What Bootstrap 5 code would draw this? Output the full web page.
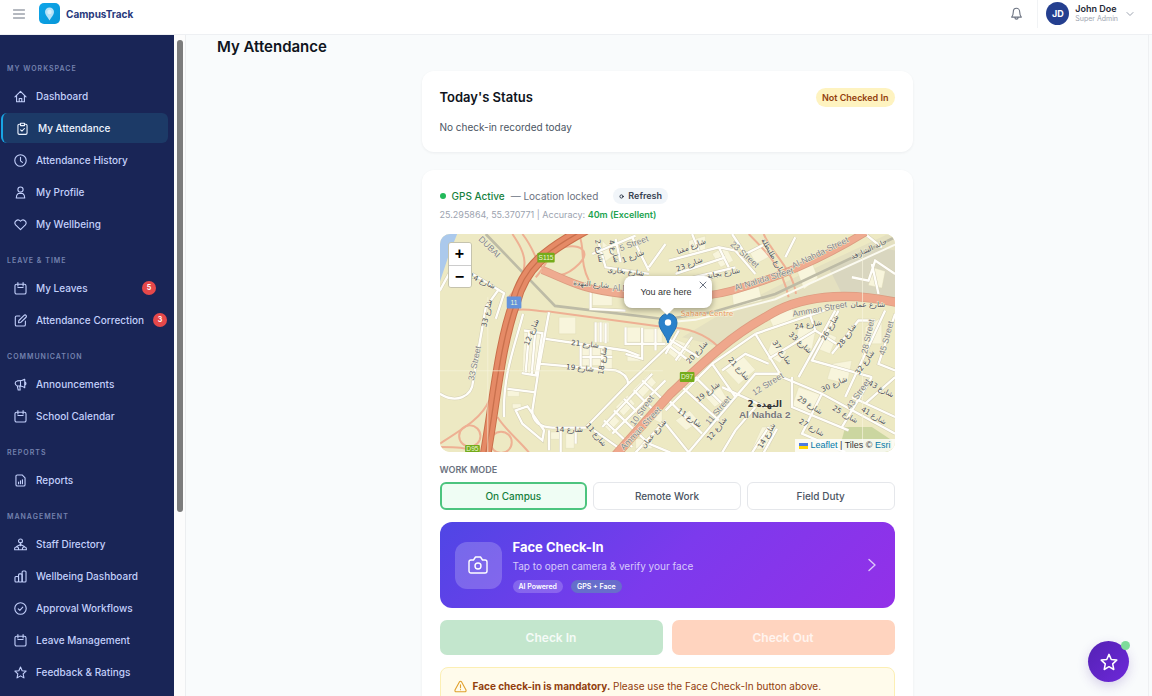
<!DOCTYPE html>
<html lang="en">
<head>
<meta charset="utf-8">
<meta name="viewport" content="width=device-width, initial-scale=1">
<title>CampusTrack – My Attendance</title>
<link href="https://cdn.jsdelivr.net/npm/bootstrap@5.3.0/dist/css/bootstrap.min.css" rel="stylesheet">
<style>
  body { font-family: Inter, "Liberation Sans", sans-serif; font-size: 10px; line-height: 16px; color: #0f1420; background: #f9fbfc; }
  button { font-family: inherit; }
  svg { flex-shrink: 0; }
  .line-icon { fill: none; stroke: currentColor; stroke-width: 1.7; stroke-linecap: round; stroke-linejoin: round; }
  .thin { stroke-width: 1; }
  .medium { stroke-width: 1.4; }

  .topbar { height: 35px; padding: 0 18px 7px 13px; background: #fff; border-bottom: 1px solid #eef0f3; }
  .plain-btn { background: none; border: 0; padding: 0; line-height: 0; color: #6b7280; }
  .bell-btn { margin: 0 14px 0 auto; }
  .brand-link { font-size: 10px; font-weight: 700; color: #27397c; text-decoration: none; gap: 6px; margin-left: 14px; }
  .brand-tile { width: 21px; height: 21px; border-radius: 5px; background: linear-gradient(135deg, #0ea5e9, #0797d8); }
  .user-btn { border-left: 1px solid #f1f3f5; padding-left: 8px; height: 28px; text-align: left; gap: 6px; }
  .user-btn .line-icon { margin-left: 2px; color: #9ca3af; }
  .avatar { width: 23px; height: 23px; border-radius: 50%; background: #243f8f; color: #fff; font-size: 9px; font-weight: 700; }
  .user-name { font-size: 9px; line-height: 10px; font-weight: 600; color: #1f2937; }
  .user-role { font-size: 7px; line-height: 10px; color: #9ca3af; }

  .shell { min-height: 0; }
  .side-nav { width: 174px; background: #192556; padding-top: 14px; overflow: hidden; }
  .side-title { margin: 0; padding: 14px 0 6px 7px; font-size: 7px; line-height: 12px; font-weight: 600; letter-spacing: 1px; color: #7482ae; text-transform: uppercase; }
  .side-link { display: flex; align-items: center; gap: 9px; height: 30px; margin: 0 6px 2px 1px; padding: 0 12px 0 13px; font-weight: 500; color: #c3d0fb; text-decoration: none; white-space: nowrap; border-radius: 6px; }
  .side-link.active { background: #1c3a67; border-left: 2px solid #18a5e4; color: #eef4ff; }
  .count { flex-shrink: 0; width: 14px; height: 14px; border-radius: 50%; background: #e5484a; color: #fff; font-size: 7px; line-height: 14px; font-weight: 700; text-align: center; }
  .side-track { width: 12px; background: #fcfcfc; border-right: 1px solid #eceef0; padding: 5px 2px 0 3px; }
  .side-thumb { height: 72%; border-radius: 3px; background: #7c7c7c; }

  .content { padding: 0 31px 20px; min-width: 0; overflow-y: auto; scrollbar-width: none; margin-right: 3px; border-right: 1px solid #eef0f2; }
  .content::-webkit-scrollbar { display: none; }
  .page-title { font-size: 15px; line-height: 24px; font-weight: 600; margin-bottom: 12px; }
  .stack { max-width: 491px; margin: 0 auto; }
  .panel { background: #fff; border-radius: 12px; padding: 16px 18px 17px; margin-bottom: 18px; box-shadow: 0 1px 3px rgba(15, 23, 42, .06); }
  .panel-title { font-size: 13px; line-height: 20px; font-weight: 600; }
  .status-pill { background: #fef3c0; color: #92400e; border-radius: 10px; padding: 2px 6px; font-size: 9px; line-height: 15px; font-weight: 600; }
  .muted { color: #4b5563; }
  .gps-row { height: 20px; gap: 6px; }
  .gps-dot { width: 6px; height: 6px; border-radius: 50%; background: #22b95a; }
  .gps-on { color: #15803d; }
  .gps-note { color: #6b7280; }
  .refresh-btn { border: 0; border-radius: 8px; background: #f1f5f9; color: #374151; font-size: 9px; line-height: 16px; font-weight: 600; padding: 0 6px; margin-left: 9px; }
  .coords { font-size: 9px; line-height: 14px; color: #9ca3af; margin: 2px 0 12px; }
  .coords strong { color: #22a34f; font-weight: 600; }

  .map-box { position: relative; height: 218px; border-radius: 10px; overflow: hidden; background: #ede9c3; font-family: "Liberation Sans", Arial, sans-serif; }
  .map-art { width: 100%; height: 100%; display: block; }
  .zoom-ctl { position: absolute; top: 8px; left: 8px; border-radius: 3px; border: 1px solid #c5c3ae; overflow: hidden; }
  .zoom-ctl button { display: block; width: 22px; height: 22px; border: 0; padding: 0; background: #fff; color: #000; font-size: 16px; line-height: 20px; font-weight: 700; }
  .zoom-ctl button + button { border-top: 1px solid #ccc; }
  .pin { position: absolute; left: 50%; top: 79px; margin-left: -9px; }
  .you-pop { position: absolute; left: 50%; top: 42px; width: 88px; height: 32px; margin-left: -43px; background: #fff; border-radius: 8px; font-size: 9px; line-height: 32px; color: #333; text-align: center; padding-right: 4px; box-shadow: 0 2px 6px rgba(0, 0, 0, .35); }
  .you-pop::after { content: ""; position: absolute; left: 50%; top: 100%; margin-left: -8px; border: 7px solid transparent; border-top-color: #fff; border-bottom: 0; }
  .you-pop button { position: absolute; top: 5px; right: 5px; line-height: 0; }
  .credit { position: absolute; right: 0; bottom: 0; background: rgba(255, 255, 255, .8); padding: 0 4px; font-size: 9px; line-height: 13px; color: #333; }
  .credit a { color: #0078a8; text-decoration: none; }

  .mode-title { font-size: 9px; line-height: 14px; margin: 11px 0 5px; font-weight: 600; color: #6b7280; }
  .modes { display: grid; grid-template-columns: repeat(3, 1fr); gap: 6px; }
  .mode-btn { height: 28px; border: 1px solid #e5e7eb; border-radius: 6px; background: #fff; color: #4b5563; line-height: 16px; font-weight: 500; padding: 0; }
  .mode-btn.active { border: 2px solid #4cc47e; background: #effdf4; color: #15803d; }
  .face-btn { margin-top: 12px; min-height: 86px; padding: 0 18px 0 15px; gap: 11px; border: 0; border-radius: 12px; text-align: left; color: #fff; background: linear-gradient(135deg, #4f46e5, #7c3aed 50%, #9330e8); }
  .face-btn > .medium { color: #dcc6fa; }
  .cam-tile { width: 47px; height: 47px; border-radius: 12px; background: rgba(255, 255, 255, .2); }
  .face-title { font-size: 13px; line-height: 18px; font-weight: 700; }
  .face-sub { line-height: 16px; margin: 2px 0 6px; color: #d7c9fb; }
  .chip { border-radius: 7px; background: rgba(255, 255, 255, .2); font-size: 7px; line-height: 13px; font-weight: 600; padding: 0 6px; }
  .chip-gps { background: rgba(90, 160, 170, .5); }
  .checks { display: grid; grid-template-columns: 1fr 1fr; gap: 9px; margin-top: 12px; }
  .check-btn { height: 35px; border: 0; border-radius: 7px; font-size: 12px; font-weight: 600; color: #f5fbf7; background: #c3e6cd; }
  .check-out { color: #fff4ef; background: #ffd4bf; }
  .notice { margin-top: 12px; padding: 9px 13px; gap: 6px; border: 1px solid #fcefb4; border-radius: 8px; background: #fffbeb; color: #92400e; line-height: 18px; }
  .notice .line-icon { color: #e0a02c; }
  .fab { position: fixed; right: 23px; bottom: 14px; width: 41px; height: 41px; border: 0; border-radius: 50%; padding: 0; color: #fff; background: linear-gradient(135deg, #5422b4, #6d28d9); box-shadow: 0 4px 12px rgba(80, 40, 160, .2); }
  .fab-dot { position: absolute; top: 0; right: -1px; width: 9px; height: 9px; border-radius: 50%; background: #7edc9b; }

  .casing { fill: none; stroke: #d3ceb4; stroke-width: 10; }
  .street { fill: none; stroke: #fffefa; stroke-width: 7; }
  .ramp { fill: none; stroke: #eeb093; stroke-width: 6; }
  .lots { fill: #f8f5dc; stroke: #dcd7b4; stroke-width: 1; }
  .map-text text { font: 22px "DejaVu Sans", "Liberation Sans", sans-serif; fill: #50525c; text-anchor: middle; stroke: #f5f2d8; stroke-width: 3; paint-order: stroke; }
  .map-text .en { font-size: 26px; fill: #828388; font-family: "Liberation Sans", sans-serif; }
  .map-text .mall { font-size: 22px; fill: #e9975e; }
  .map-text .area { font-size: 26px; font-weight: 700; fill: #333; }
  .map-text .area-en { font-size: 30px; font-weight: 700; fill: #77777c; }
</style>
</head>
<body class="d-flex flex-column vh-100 overflow-hidden">

<svg width="0" height="0" class="position-absolute" aria-hidden="true">
  <defs>
    <symbol id="i-home" viewBox="0 0 20 20"><path d="M1.500 10.500 10 2l8.500 8.500M4 8.500V18h12V8.500M8 18v-5h4v5"/></symbol>
    <symbol id="i-clip" viewBox="0 0 20 20"><path d="M7 3.500H5a2 2 0 0 0-2 2V17a2 2 0 0 0 2 2h10a2 2 0 0 0 2-2V5.500a2 2 0 0 0-2-2h-2M7 2h6v3.500H7zM7 12l2.200 2.200L13 10"/></symbol>
    <symbol id="i-clock" viewBox="0 0 20 20"><circle cx="10" cy="10" r="8.800"/><path d="M10 5v5.500l3 2.500"/></symbol>
    <symbol id="i-user" viewBox="0 0 20 20"><circle cx="10" cy="5.500" r="4"/><path d="M6.500 11.500h7q3 2 3 7h-13q0-5 3-7z"/></symbol>
    <symbol id="i-heart" viewBox="0 0 20 20"><path d="M10 18 2.500 10.500C-1 6 5.500 0 10 5c4.500-5 11 1 7.500 5.500z"/></symbol>
    <symbol id="i-cal" viewBox="0 0 20 20"><rect x="1.500" y="3.500" width="17" height="15" rx="2.500"/><path d="M6 1v5M14 1v5M6 8.500h8"/></symbol>
    <symbol id="i-edit" viewBox="0 0 20 20"><path d="M9 3H4a2 2 0 0 0-2 2v11.500a2 2 0 0 0 2 2h11.500a2 2 0 0 0 2-2V11M7 13.500l.5-3.500 8-8a2 2 0 0 1 3 3l-8 8z"/></symbol>
    <symbol id="i-horn" viewBox="0 0 20 20"><path d="M16.500 2v13C13 12 10 12 5 12a3.800 3.800 0 0 1 0-7.500c5 0 8 0 11.500-2.500zM10 4.500V12M5 12l1.500 6.500h3L9 12.500M16.500 6c2.500.5 2.500 4.500 0 5"/></symbol>
    <symbol id="i-report" viewBox="0 0 20 20"><path d="M12.500 1.500H5a2 2 0 0 0-2 2v13a2 2 0 0 0 2 2h10a2 2 0 0 0 2-2V6zM7 15v-2.500M10 15v-4.500M13 15V9"/></symbol>
    <symbol id="i-staff" viewBox="0 0 20 20"><circle cx="10" cy="4.500" r="3"/><path d="M10 7.500V12M4 13l6-3 6 3M1 18v-2c0-3 6-3 6 0v2zM13 18v-2c0-3 6-3 6 0v2zM7 18h6"/></symbol>
    <symbol id="i-bars" viewBox="0 0 20 20"><rect x="1.500" y="10" width="5.500" height="8.500" rx="1.500"/><rect x="7" y="6" width="5.500" height="12.500" rx="1.500"/><rect x="12.500" y="1.500" width="6" height="17" rx="1.500"/></symbol>
    <symbol id="i-check" viewBox="0 0 20 20"><circle cx="10" cy="10" r="8.800"/><path d="m6.500 10.500 2.500 2.300L13.500 8"/></symbol>
    <symbol id="i-star" viewBox="0 0 20 20"><path d="m10 1.500 2.500 5.700 6.100.7-4.500 4.200 1.200 6.200L10 15.200l-5.300 3.100 1.200-6.200L1.400 7.900l6.100-.7z"/></symbol>
  </defs>
</svg>

<header class="topbar d-flex align-items-center flex-shrink-0">
  <button class="plain-btn" aria-label="Toggle menu"><svg class="line-icon thin" width="12" height="12" viewBox="0 0 12 12"><path d="M.5 2h11M.5 6h11M.5 10h11"/></svg></button>
  <a href="#" class="brand-link d-flex align-items-center">
    <span class="brand-tile d-flex align-items-center justify-content-center"><svg width="11" height="14" viewBox="0 0 11 14"><path d="M5.500 13.500C3.500 10 1 8 1 5a4.500 4.500 0 0 1 9 0c0 3-2.500 5-4.500 8.500z" fill="#b5e2f8"/><circle cx="5.500" cy="5" r="2.200" fill="#d9f1fc"/></svg></span>
    CampusTrack
  </a>
  <button class="plain-btn bell-btn" aria-label="Notifications"><svg class="line-icon" width="13" height="13" viewBox="0 0 20 20"><path d="M2.500 15.500h15c-2-2-2.500-3.500-2.500-7.500 0-8-10-8-10 0 0 4-.5 5.500-2.500 7.500zM7.500 16c0 3.500 5 3.500 5 0"/></svg></button>
  <button class="plain-btn user-btn d-flex align-items-center">
    <span class="avatar d-flex align-items-center justify-content-center">JD</span>
    <span><span class="user-name d-block">John Doe</span><span class="user-role d-block">Super Admin</span></span>
    <svg class="line-icon thin" width="8" height="8" viewBox="0 0 8 8"><path d="m1 2.500 3 3 3-3"/></svg>
  </button>
</header>

<div class="shell d-flex flex-grow-1">
  <nav class="side-nav flex-shrink-0" aria-label="Main">
    <h6 class="side-title">My Workspace</h6>
    <a class="side-link" href="#"><svg class="line-icon" width="13" height="13"><use href="#i-home"/></svg>Dashboard</a>
    <a class="side-link active" href="#" aria-current="page"><svg class="line-icon" width="13" height="13"><use href="#i-clip"/></svg>My Attendance</a>
    <a class="side-link" href="#"><svg class="line-icon" width="13" height="13"><use href="#i-clock"/></svg>Attendance History</a>
    <a class="side-link" href="#"><svg class="line-icon" width="13" height="13"><use href="#i-user"/></svg>My Profile</a>
    <a class="side-link" href="#"><svg class="line-icon" width="13" height="13"><use href="#i-heart"/></svg>My Wellbeing</a>
    <h6 class="side-title">Leave &amp; Time</h6>
    <a class="side-link" href="#"><svg class="line-icon" width="13" height="13"><use href="#i-cal"/></svg>My Leaves<span class="count ms-auto">5</span></a>
    <a class="side-link" href="#"><svg class="line-icon" width="13" height="13"><use href="#i-edit"/></svg>Attendance Correction<span class="count ms-auto">3</span></a>
    <h6 class="side-title">Communication</h6>
    <a class="side-link" href="#"><svg class="line-icon" width="13" height="13"><use href="#i-horn"/></svg>Announcements</a>
    <a class="side-link" href="#"><svg class="line-icon" width="13" height="13"><use href="#i-cal"/></svg>School Calendar</a>
    <h6 class="side-title">Reports</h6>
    <a class="side-link" href="#"><svg class="line-icon" width="13" height="13"><use href="#i-report"/></svg>Reports</a>
    <h6 class="side-title">Management</h6>
    <a class="side-link" href="#"><svg class="line-icon" width="13" height="13"><use href="#i-staff"/></svg>Staff Directory</a>
    <a class="side-link" href="#"><svg class="line-icon" width="13" height="13"><use href="#i-bars"/></svg>Wellbeing Dashboard</a>
    <a class="side-link" href="#"><svg class="line-icon" width="13" height="13"><use href="#i-check"/></svg>Approval Workflows</a>
    <a class="side-link" href="#"><svg class="line-icon" width="13" height="13"><use href="#i-cal"/></svg>Leave Management</a>
    <a class="side-link" href="#"><svg class="line-icon" width="13" height="13"><use href="#i-star"/></svg>Feedback &amp; Ratings</a>
  </nav>
  <div class="side-track flex-shrink-0"><div class="side-thumb"></div></div>

  <main class="content flex-grow-1">
    <h1 class="page-title">My Attendance</h1>
    <div class="stack">
      <section class="panel">
        <div class="d-flex align-items-center justify-content-between">
          <h2 class="panel-title mb-0">Today's Status</h2>
          <span class="status-pill">Not Checked In</span>
        </div>
        <p class="muted mb-0 pt-2 mt-1">No check-in recorded today</p>
      </section>

      <section class="panel">
        <div class="gps-row d-flex align-items-center">
          <span class="gps-dot"></span>
          <span class="gps-on fw-medium">GPS Active</span>
          <span class="gps-note">— Location locked</span>
          <button class="refresh-btn"><svg class="line-icon thin me-1" width="5" height="5" viewBox="0 0 5 5"><circle cx="2.500" cy="2.500" r="1.600"/><path d="M4 2.500h1"/></svg>Refresh</button>
        </div>
        <p class="coords">25.295864, 55.370771 | Accuracy: <strong>40m (Excellent)</strong></p>

        <div class="map-box">
          <svg class="map-art" viewBox="12 10 1368 655" preserveAspectRatio="xMidYMid slice" role="img" aria-label="Street map of Al Nahda 2">
            <defs>
              <g id="roads">
                <path d="M12 490C60 520 110 500 112 450L150 230 190 175M45 90 205 188 180 265M12 180 50 110M262 250C240 340 200 430 205 560M340 245 310 410 290 540C290 580 320 590 350 592L450 592 578 460 715 330M315 400 540 420Q575 430 578 460M330 325 570 360 610 375M265 300 320 308 300 435 258 428M280 305 270 425M298 308 288 432M215 475 295 485M240 540 275 528 325 600 320 630 260 580zM465 175V235L570 240M480 275V335M495 275V335M510 278V338M570 290V340L690 340M620 292V385L570 370M660 295V360M435 345V410M465 350V412M500 355V415M440 380H530M475 600 560 660M505 570 590 650M535 540 640 640M565 505 620 560M595 480 650 535M620 450 680 505M530 610 690 450M500 590 650 430M600 667 690 570M640 640 705 667M490 40 510 110 640 130M540 25 555 95M590 20 640 120M470 70 600 15M690 40 640 110M340 600V660M375 595V667M420 597V640"/>
                <path d="M700 90 850 50 900 60 960 130M720 130 870 80M770 10 790 60M850 50 880 110M890 10 930 70 990 40M690 160 900 110M1080 20 1050 80M690 320 790 380M700 345 760 390M730 300 690 370M770 320 720 390M960 310 1040 440 1160 490 1380 610M960 310 1180 235M1000 385 1140 300 1120 240M1090 440 1200 240M1210 240 1130 390 1310 440M1230 500 1350 240M1140 300 1220 350M1190 370 1270 270 1320 270M1380 250 1330 400 1380 420M1310 440 1220 590M1380 440 1290 520M1070 440 1070 530 1240 600M1160 490 1100 610 1230 665M1250 500 1380 560M690 540 830 400 900 500 960 430 1040 430M830 400 960 310M860 420 930 370 1000 400M860 470 990 530M900 500 760 665M690 500 800 610M740 470 850 570M780 440 870 530M690 580 760 667M960 530 900 600 860 667M1000 590 950 667M1025 595 985 667M1290 10 1340 50M1380 130 1320 90 1300 150 1250 140M1310 100 1330 190"/>
              </g>
            </defs>
            <rect x="-400" y="0" width="2200" height="680" fill="#ede9c3"/>
            <path d="M0 0h68L40 70 0 190z" fill="#abc9ec"/>
            <path d="M1080 140 1380 0V215C1280 190 1180 185 1100 200 980 230 920 290 860 350l-120-30 100-60z" fill="#e4e0c0"/>
            <path d="M1180 110 1330 50l50 10v145l-160-15z" fill="#d9d6bf"/>
            <path d="M1230 590h80l60 40v35h-160z" fill="#cbd6a0"/>
            <g class="lots">
              <path d="M370 260h50v50h-50zM475 275h45v60h-45zM570 290h45v45h-45zM625 295h55v45h-55zM265 300l50 8-15 130-40-10zM435 345h60v60h-60zM500 355h30v60h-30zM575 370h40v22h-40zM215 480h36v18h-36zM230 520h26v14h-26zM470 185h60v40h-60zM590 480l50-50 22 26-46 50zM540 530l36-36 22 26-34 36zM500 580l30-30 22 22-30 32zM640 560l40-30v50zM600 625h50v30h-50zM390 610h26v44h-26zM345 605h30v22h-30z"/>
              <path d="M890 190 970 168l10 42-85 20zM1085 120l45-24 18 46-42 34zM830 70l40-24 24 44-38 20zM940 60l50-24 16 40-44 24zM1000 260l70-26 12 26-66 34zM1090 290l52 6-12 60-50-20zM1160 300l44 20-20 50-40-16zM870 420l54-42 36 40-50 44zM1010 330l44 34-20 34-40-26zM1190 400l60-10-14 70-60-14zM1290 290l50-30v80h-50zM720 570l42-30 30 34-40 26zM810 500l44-30 20 34-36 26zM1090 470l70 24-30 60-60-26zM980 590h44l-24 66h-50zM705 320l60 24-34 50-50-40zM1310 110l40 12-10 50-40-8zM500 30l40 40-40 30zM760 30l50-14v44l-50 10z"/>
            </g>
            <g class="ramp">
              <path d="M260 10C300 60 300 100 330 120S390 140 430 100 430 40 385 50 330 110 300 140M430 10C450 60 430 90 460 150M230 10C270 70 290 110 220 200M235 240C270 230 310 245 340 243L690 290C740 290 800 300 850 350M940 10C1000 70 1040 110 1060 200M985 10C1010 70 1070 110 1082 190M12 640C90 590 140 560 160 510M12 650C60 650 90 650 130 667M185 560C210 600 250 630 280 667"/>
              <circle cx="102" cy="617" r="32"/><circle cx="196" cy="636" r="32"/>
            </g>
            <path d="M150 10 358 226 690 266 830 245 1020 190 1380 20" fill="none" stroke="#bdbba6" stroke-width="8"/>
            <path d="M690 276 780 268 1020 206 1380 42" fill="none" stroke="#fbfaf0" stroke-width="6"/>
            <use href="#roads" class="casing"/>
            <use href="#roads" class="street"/>
            <g fill="none">
              <path d="M320 118C400 150 430 175 560 190S800 205 890 180 1120 110 1290 5" stroke="#dc9c80" stroke-width="24"/>
              <path d="M320 118C400 150 430 175 560 190S800 205 890 180 1120 110 1290 5" stroke="#efab90" stroke-width="19"/>
              <path d="M535 680 705 490C800 400 880 320 990 260 1090 195 1230 180 1395 218" stroke="#dc9c80" stroke-width="28"/>
              <path d="M535 680 705 490C800 400 880 320 990 260 1090 195 1230 180 1395 218" stroke="#efa78c" stroke-width="23"/>
              <path d="M450-5C330 60 265 110 238 215 190 350 180 500 148 680" stroke="#c96f4b" stroke-width="35"/>
              <path d="M450-5C330 60 265 110 238 215 190 350 180 500 148 680" stroke="#e58a66" stroke-width="29"/>
              <path d="M450-5C330 60 265 110 238 215 190 350 180 500 148 680" stroke="#c9704d" stroke-width="4"/>
              <path d="M156 200v467M12 421h670M1282 60v600" stroke="#f8f5de" stroke-width="2"/>
            </g>
            <g class="map-text">
              <text transform="translate(136 158) rotate(24)">شارع 14</text>
              <text transform="translate(160 250) rotate(-78)">شارع 33</text>
              <text class="en" transform="translate(125 400) rotate(-78)">33 Street</text>
              <text class="en" transform="translate(155 55) rotate(45)">DUBAI</text>
              <text transform="translate(294 308) rotate(-68)">شارع 12</text>
              <text transform="translate(447 348) rotate(6)">شارع 21</text>
              <text transform="translate(432 420) rotate(5)">شارع 19</text>
              <text transform="translate(508 392) rotate(-82)">شارع 18</text>
              <text transform="translate(400 605)">شارع 14</text>
              <text transform="translate(476 618) rotate(50)">شارع 11</text>
              <text transform="translate(484 62) rotate(80)">شارع 2</text>
              <text transform="translate(528 64) rotate(75)">شارع 4</text>
              <text class="en" transform="translate(598 46) rotate(-20)">5 Street</text>
              <text transform="translate(595 84) rotate(-22)">شارع 1</text>
              <text transform="translate(570 130) rotate(6)">شارع بخارى</text>
              <text transform="translate(466 168) rotate(5)">شارع النهدة</text>
              <text class="en" transform="translate(555 182)">Al N</text>
              <text class="en" transform="translate(626 545) rotate(-55)">10 Street</text>
              <text class="en" transform="translate(622 600) rotate(-47)">Amman Street</text>
              <text transform="translate(660 615) rotate(-50)">شارع عمان</text>
              <text transform="translate(770 54) rotate(-22)">شارع مقنا</text>
              <text transform="translate(764 108) rotate(-22)">شارع 23</text>
              <text class="en" transform="translate(922 78) rotate(42)">23 Street</text>
              <text transform="translate(1008 82) rotate(60)">شارع طليطلة</text>
              <text transform="translate(865 135) rotate(-10)">شارع بجاية</text>
              <text class="en" transform="translate(988 154) rotate(-17)">Al Nahda Street</text>
              <text class="en" transform="translate(1158 74) rotate(-26)">Al-Nahda-Street</text>
              <text transform="translate(1304 62) rotate(-25)">خانة الشارقة</text>
              <text class="en" transform="translate(1155 244) rotate(-10)">Amman Street</text>
              <text transform="translate(1298 230)">شارع عمان</text>
              <text class="mall" x="815" y="256">Sahara Centre</text>
              <text transform="translate(1120 290) rotate(-10)">شارع 24</text>
              <text transform="translate(1190 295) rotate(-60)">شارع 26</text>
              <text transform="translate(1240 320) rotate(-55)">شارع 28</text>
              <text class="en" transform="translate(1306 320) rotate(-78)">28 Street</text>
              <text class="en" transform="translate(1362 325) rotate(-75)">45 Street</text>
              <text transform="translate(1090 342) rotate(42)">شارع 33</text>
              <text transform="translate(1034 370) rotate(55)">شارع 37</text>
              <text transform="translate(1295 400) rotate(-55)">شارع 32</text>
              <text transform="translate(790 370) rotate(-48)">شارع 20</text>
              <text transform="translate(905 420) rotate(48)">شارع 21</text>
              <text class="en" transform="translate(1002 468) rotate(-32)">12 Street</text>
              <text transform="translate(822 490) rotate(-38)">شارع 19</text>
              <text class="en" transform="translate(855 545) rotate(-50)">11 Street</text>
              <text transform="translate(758 568) rotate(35)">شارع 11</text>
              <text transform="translate(850 600) rotate(-52)">شارع 12</text>
              <text transform="translate(1200 468) rotate(-25)">شارع 30</text>
              <text transform="translate(1120 530) rotate(32)">شارع 29</text>
              <text transform="translate(1226 558) rotate(30)">شارع 25</text>
              <text transform="translate(1125 598) rotate(30)">شارع 27</text>
              <text class="en" transform="translate(1276 496) rotate(-55)">43 Street</text>
              <text transform="translate(1312 562) rotate(30)">شارع 41</text>
              <text transform="translate(1334 482) rotate(28)">شارع 43</text>
              <text transform="translate(1000 620) rotate(-60)">شارع 14</text>
              <text class="area" x="988" y="530">النهدة 2</text>
              <text class="en area-en" x="988" y="563">Al Nahda 2</text>
            </g>
            <g text-anchor="middle" fill="#eef6d5" font-family="Liberation Sans" font-size="20">
              <rect x="305" y="66" width="52" height="30" rx="3" fill="#74ab1a"/><text x="331" y="88">S115</text>
              <rect x="733" y="425" width="44" height="30" rx="3" fill="#74ab1a"/><text x="755" y="447">D97</text>
              <rect x="88" y="644" width="44" height="34" rx="3" fill="#74ab1a"/><text x="110" y="661">D95</text>
              <rect x="213" y="198" width="44" height="36" rx="3" fill="#6593db"/><text x="235" y="224">11</text>
            </g>
          </svg>

          <div class="zoom-ctl"><button aria-label="Zoom in">+</button><button aria-label="Zoom out">−</button></div>
          <svg class="pin" width="20" height="31" viewBox="0 0 20 31"><path d="M10 30C8 22 1 17 1 9.500a9 9 0 0 1 18 0C19 17 12 22 10 30z" fill="#2a81cb" stroke="#256fae"/><circle cx="10" cy="9.500" r="3.200" fill="#fff"/></svg>
          <div class="you-pop">You are here<button class="plain-btn" aria-label="Close popup"><svg class="line-icon thin" width="8" height="8" viewBox="0 0 8 8"><path d="m1 1 6 6M7 1 1 7"/></svg></button></div>
          <div class="credit"><a href="#"><svg width="9" height="6" viewBox="0 0 9 6"><path d="M0 0h9v3H0z" fill="#4c7be1"/><path d="M0 3h9v3H0z" fill="#ffd500"/></svg> Leaflet</a> | Tiles © <a href="#">Esri</a></div>
        </div>

        <h3 class="mode-title">WORK MODE</h3>
        <div class="modes">
          <button class="mode-btn active" aria-pressed="true">On Campus</button>
          <button class="mode-btn" aria-pressed="false">Remote Work</button>
          <button class="mode-btn" aria-pressed="false">Field Duty</button>
        </div>

        <button class="face-btn d-flex align-items-center w-100">
          <span class="cam-tile d-flex align-items-center justify-content-center"><svg class="line-icon medium" width="20" height="20" viewBox="0 0 20 20"><path d="M3 5h2.500L7.500 2h5l2 3H17a2 2 0 0 1 2 2v9a2 2 0 0 1-2 2H3a2 2 0 0 1-2-2V7a2 2 0 0 1 2-2z"/><circle cx="10" cy="11" r="3"/></svg></span>
          <span class="flex-grow-1">
            <span class="face-title d-block">Face Check-In</span>
            <span class="face-sub d-block">Tap to open camera &amp; verify your face</span>
            <span class="d-flex gap-2"><span class="chip">AI Powered</span><span class="chip chip-gps">GPS + Face</span></span>
          </span>
          <svg class="line-icon medium" width="10" height="14" viewBox="0 0 10 14"><path d="m2 1.500 6 5.500-6 5.500"/></svg>
        </button>

        <div class="checks">
          <button class="check-btn" disabled>Check In</button>
          <button class="check-btn check-out" disabled>Check Out</button>
        </div>

        <div class="notice d-flex align-items-center" role="note">
          <svg class="line-icon" width="13" height="13" viewBox="0 0 20 20"><path d="M8.300 3 1.500 15.500Q1 18 3.500 18h13q2.500 0 2-2.500L11.700 3Q10 1 8.300 3zM10 7.500v4.500M10 14.800v.2"/></svg>
          <span><strong class="fw-bold">Face check-in is mandatory.</strong> Please use the Face Check-In button above.</span>
        </div>
      </section>
    </div>
  </main>
</div>

<button class="fab" aria-label="Assistant"><svg class="line-icon" width="18" height="18" viewBox="0 0 20 20"><use href="#i-star"/></svg><span class="fab-dot"></span></button>

<script src="https://cdn.jsdelivr.net/npm/bootstrap@5.3.0/dist/js/bootstrap.bundle.min.js"></script>
</body>
</html>
